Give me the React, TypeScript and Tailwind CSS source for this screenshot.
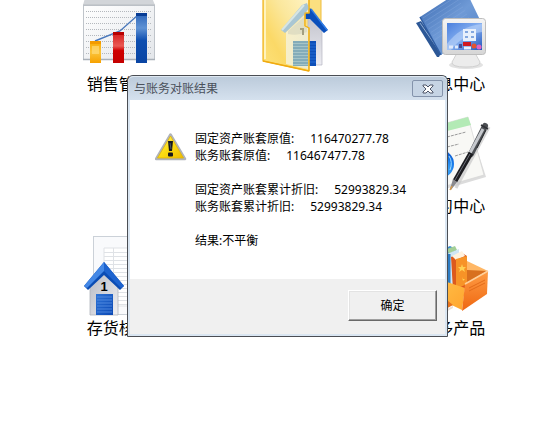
import React from 'react'

const cjkFont = 'font-["Noto_Sans","Noto_Sans_CJK_SC",sans-serif]'

const SalesIcon = () => (
    <svg viewBox="0 0 96 80" className="h-20 w-24" aria-hidden="true">
        <defs>
            <linearGradient id="board" x1="0" y1="0" x2="1" y2="1">
                <stop offset="0" stopColor="#ffffff" />
                <stop offset="1" stopColor="#e3e6ea" />
            </linearGradient>
            <linearGradient id="barYellow" x1="0" y1="0" x2="0" y2="1">
                <stop offset="0" stopColor="#f9a800" />
                <stop offset="0.5" stopColor="#fbc53c" />
                <stop offset="1" stopColor="#f6a100" />
            </linearGradient>
            <linearGradient id="barRed" x1="0" y1="0" x2="0" y2="1">
                <stop offset="0" stopColor="#d31a1a" />
                <stop offset="0.45" stopColor="#ea5a55" />
                <stop offset="0.6" stopColor="#cf0000" />
                <stop offset="1" stopColor="#c40000" />
            </linearGradient>
            <linearGradient id="barBlue" x1="0" y1="0" x2="0" y2="1">
                <stop offset="0" stopColor="#2a63b8" />
                <stop offset="0.3" stopColor="#5f92d4" />
                <stop offset="0.55" stopColor="#0d4eb0" />
                <stop offset="1" stopColor="#0a45a3" />
            </linearGradient>
        </defs>
        <path d="M14 6H81L84 13H12Z" fill="#d2d5d9" />
        <rect x="12.5" y="13.5" width="71" height="54" fill="url(#board)" stroke="#bfc4ca" />
        <path d="M12 13H84" stroke="#b8bcc1" strokeWidth="1" />
        <path d="M12 67.5H84" stroke="#a9b0b8" strokeWidth="1.5" />
        {[19, 25, 31, 37, 43, 49, 55, 61].map((y) => (
            <path key={y} d={`M15 ${y}.5H81`} stroke="#b4b8bd" strokeDasharray="1 1" />
        ))}
        <path d="M24 49L49 39L67 23" fill="none" stroke="#4a78bb" strokeWidth="1.4" />
        <rect x="19" y="49" width="11" height="22" fill="url(#barYellow)" />
        <rect x="19" y="49" width="11" height="3" fill="#f39a00" />
        <path d="M21 54H28V62H21Z" fill="#ffdf86" opacity="0.6" />
        <rect x="42" y="40" width="11" height="31" fill="url(#barRed)" />
        <rect x="42" y="40" width="11" height="3" fill="#b80000" />
        <rect x="65" y="21" width="11" height="50" fill="url(#barBlue)" />
        <rect x="65" y="21" width="11" height="3" fill="#073c94" />
    </svg>
)

const FolderIcon = () => (
    <svg viewBox="0 0 96 80" className="h-20 w-24" aria-hidden="true">
        <defs>
            <linearGradient id="folder" x1="0" y1="1" x2="1" y2="0">
                <stop offset="0" stopColor="#fde27c" />
                <stop offset="0.3" stopColor="#fbd967" />
                <stop offset="0.6" stopColor="#fbe79c" />
                <stop offset="1" stopColor="#fff5c8" />
            </linearGradient>
            <linearGradient id="fadedWall" x1="0" y1="0" x2="1" y2="0">
                <stop offset="0" stopColor="#f7efc9" />
                <stop offset="1" stopColor="#eeebcf" />
            </linearGradient>
            <linearGradient id="sideWall" x1="0" y1="0" x2="0" y2="1">
                <stop offset="0" stopColor="#c3c4cd" />
                <stop offset="1" stopColor="#ececf2" />
            </linearGradient>
        </defs>
        <path d="M68 0H83V36H68Z" fill="#fbdf80" />
        <path d="M83 0V33" stroke="#efbd3c" />
        <path d="M70 26L76 26L84 38V73H70Z" fill="url(#sideWall)" stroke="#b4b6c2" strokeWidth="0.7" />
        <rect x="70" y="49" width="8" height="25" fill="#0d4fb8" />
        {[52, 55, 58, 61, 64, 67, 70].map((y) => (
            <path key={y} d={`M70 ${y}H78`} stroke="#2a72da" strokeWidth="0.8" />
        ))}
        <path d="M66 21L72 16L90 38L86 41L72 27H66Z" fill="#0a4fbb" />
        <path d="M73 17L89 38" stroke="#2f7be4" strokeWidth="1.5" />
        <path
            d="M25 0V69L71 79V36L67 34V21H71V0Z"
            fill="url(#folder)"
            stroke="#f0b41e"
            strokeWidth="1.2"
            strokeLinejoin="round"
        />
        <path d="M27 0V67" stroke="#fff3bd" strokeWidth="2" />
        <path d="M48 40L66 24V34L70 36V77L48 72Z" fill="url(#fadedWall)" />
        <path d="M50 39L66 25V34L69 36V40Q60 44 50 42Z" fill="#d3d3bd" opacity="0.6" />
        <path d="M55 49H70V74H55Z" fill="#84acb9" />
        {[51, 54, 57, 60, 63, 66, 69, 72].map((y) => (
            <path key={y} d={`M55 ${y}.5H70`} stroke="#a5c4c8" strokeWidth="1" />
        ))}
        <path d="M43 38L64 13L69 11L71 16L66 23L47 41Z" fill="#a9c6d3" />
        <path d="M44 38L66 13" stroke="#d7e5e3" strokeWidth="2" />
        <path d="M62 37H65V43" fill="none" stroke="#a39f80" strokeWidth="2" />
        <path d="M71 79V36L67 34V21H71V0" fill="none" stroke="#f0b41e" strokeWidth="1.2" />
        <path d="M25 69L71 79" stroke="#f0aa10" strokeWidth="1.5" />
    </svg>
)

const InfoIcon = () => (
    <svg viewBox="0 0 96 80" className="h-20 w-24" aria-hidden="true">
        <defs>
            <linearGradient id="book" x1="0" y1="0" x2="1" y2="1">
                <stop offset="0" stopColor="#3a69b0" />
                <stop offset="0.5" stopColor="#6f9ad6" />
                <stop offset="1" stopColor="#4f7fc4" />
            </linearGradient>
            <linearGradient id="screen" x1="0" y1="0" x2="1" y2="1">
                <stop offset="0" stopColor="#4a7fdd" />
                <stop offset="0.5" stopColor="#86b0f0" />
                <stop offset="1" stopColor="#1f54bb" />
            </linearGradient>
            <linearGradient id="bezel" x1="0" y1="0" x2="0" y2="1">
                <stop offset="0" stopColor="#f4f4f4" />
                <stop offset="1" stopColor="#d6d6d6" />
            </linearGradient>
        </defs>
        <path d="M11 31L16 29L37 59L34 65H32Z" fill="#2c5796" />
        <path d="M15 31L35 60" stroke="#8fabd2" strokeWidth="1" />
        <path d="M15 25L52 1L64 5L76 30L36 63Z" fill="url(#book)" />
        <path d="M15 25L36 63" stroke="#2f5da3" strokeWidth="1.5" />
        {[0, 2, 4, 6, 8, 10, 12].map((n) => (
            <path key={n} d={`M${18 + n} ${26 + n * 1.8}L${52 + n} ${4 + n * 1.8}`} stroke="#86aadd" strokeWidth="0.4" />
        ))}
        <ellipse cx="61" cy="73" rx="17" ry="4" fill="#e2e2e2" />
        <path d="M52 61H70L75 70Q76 75 61 75Q46 75 47 70Z" fill="#ececec" stroke="#c9c9c9" strokeWidth="0.8" />
        <rect x="37.5" y="26.5" width="43" height="36" rx="3" fill="url(#bezel)" stroke="#bdbdbd" />
        <rect x="42" y="31" width="35" height="27" fill="url(#screen)" />
        <path d="M42 52Q55 34 77 32V40Q58 42 46 58H42Z" fill="#b9d2f8" opacity="0.6" />
        <path d="M58 37H71V49H58Z" fill="#e8f0fc" />
        <path d="M60 40H63M66 40H69M60 45H63M66 45H69" stroke="#83a7df" strokeWidth="2" />
        <path d="M44 55H48M50 55H53" stroke="#dfe9fb" strokeWidth="3" />
        <path d="M54 54H57" stroke="#444e90" strokeWidth="4" />
        <rect x="58" y="50" width="8" height="4" fill="#d0191f" />
        <path d="M59 56H66" stroke="#e8f0fc" strokeWidth="3" />
        <circle cx="69" cy="54" r="2.5" fill="#e5532e" />
        <circle cx="74" cy="55" r="2.5" fill="#df63c4" />
    </svg>
)

const StudyIcon = () => (
    <svg viewBox="0 0 96 80" className="h-20 w-24" aria-hidden="true">
        <defs>
            <radialGradient id="globe" cx="0.6" cy="0.7" r="0.7">
                <stop offset="0" stopColor="#5cc4ff" />
                <stop offset="0.6" stopColor="#1478ea" />
                <stop offset="1" stopColor="#0c4fc4" />
            </radialGradient>
        </defs>
        <path d="M20 17L62 4L81 63L30 78Z" fill="#dcdcdc" />
        <path d="M20 15L63 3L79 61L30 75Z" fill="#f8f8f5" stroke="#d5d5d5" strokeWidth="0.7" />
        <path d="M20 15L63 3L66 11L22 22Z" fill="#b3eab5" />
        <path d="M42 23L61 18M42 33L54 30M50 42L63 38" stroke="#9a9a9a" strokeWidth="1" strokeDasharray="3 1" />
        <circle cx="35" cy="50" r="14" fill="url(#globe)" />
        <path d="M44 42Q48 48 45 56" fill="none" stroke="#9fdcff" strokeWidth="1" />
        <path d="M84 13L51 74" stroke="#c8c8c8" strokeWidth="3" opacity="0.7" />
        <path d="M80 12L66 40" stroke="#4c4f53" strokeWidth="6" strokeLinecap="round" />
        <path d="M78 15L65 39" stroke="#c6c9ce" strokeWidth="3" />
        <path d="M66 39L50 67" stroke="#1c1c20" strokeWidth="5" />
        <path d="M65 40L50 66" stroke="#6c6f78" strokeWidth="1" />
        <path d="M48 65L52 68L46 76L45 75Z" fill="#8a8a8e" />
        <path d="M47 72L45 76" stroke="#d79b4a" strokeWidth="1.5" />
        <path d="M76 11L83 15" stroke="#303236" strokeWidth="1.5" />
        <path d="M81 16L72 34" stroke="#292b2f" strokeWidth="1" />
    </svg>
)

const StockIcon = () => (
    <svg viewBox="0 0 96 80" className="h-20 w-24" aria-hidden="true">
        <defs>
            <linearGradient id="wall" x1="0" y1="0" x2="1" y2="1">
                <stop offset="0" stopColor="#b5b8c2" />
                <stop offset="1" stopColor="#f0f0f3" />
            </linearGradient>
            <linearGradient id="door" x1="0" y1="0" x2="1" y2="1">
                <stop offset="0" stopColor="#2f74d6" />
                <stop offset="1" stopColor="#0a48b4" />
            </linearGradient>
        </defs>
        <rect x="22.5" y="0.5" width="62" height="78" fill="#f9fafc" stroke="#cbd1d8" />
        <path d="M33 12H80V70H33Z" fill="#ffffff" stroke="#dfe2e6" />
        {[16, 20, 24, 28, 32, 36, 40, 44, 48, 52, 56, 60, 64, 68].map((y) => (
            <path key={y} d={`M33 ${y}.5H80`} stroke="#dfe2e6" />
        ))}
        <path d="M42.5 12V70" stroke="#dfe2e6" />
        <path d="M19 48L33 35L47 48V79H19Z" fill="url(#wall)" stroke="#aeb2bb" strokeWidth="0.8" />
        <path d="M33 26L13 50L17 54L33 39L49 54L53 50Z" fill="#0b4cb4" />
        <path d="M33 26L13 50L16 52L33 35Z" fill="#4488e6" />
        <path d="M33 26L53 50L50 52L33 35Z" fill="#1d63cf" />
        <text
            x="33"
            y="55"
            textAnchor="middle"
            className='fill-black font-["Liberation_Sans",sans-serif] text-[13px] font-bold'
        >
            1
        </text>
        <rect x="25" y="58" width="17" height="21" fill="url(#door)" />
        {[61, 64, 67, 70, 73, 76].map((y) => (
            <path key={y} d={`M26 ${y}H41`} stroke="#5c93e4" strokeWidth="0.8" />
        ))}
    </svg>
)

const ProductsIcon = () => (
    <svg viewBox="0 0 96 80" className="h-20 w-24" aria-hidden="true">
        <defs>
            <linearGradient id="boxFront" x1="0" y1="0" x2="0" y2="1">
                <stop offset="0" stopColor="#ff9d45" />
                <stop offset="1" stopColor="#ee6711" />
            </linearGradient>
            <linearGradient id="boxSide" x1="0" y1="0" x2="1" y2="1">
                <stop offset="0" stopColor="#ffc04a" />
                <stop offset="1" stopColor="#ffa52e" />
            </linearGradient>
        </defs>
        <path d="M62 27L82 35L60 48L40 44Z" fill="#d8701f" />
        <path d="M62 25L83 35L62 34Z" fill="#ffb765" />
        <path d="M34 15L45 10L51 13V50H34Z" fill="#3d8ed1" />
        <path d="M42 13L50 10L52 14L44 18Z" fill="#a3cf97" />
        <path d="M42 18L54 13V50H42Z" fill="#cfe6f4" />
        <path d="M44 18V48" stroke="#2d7cc3" strokeWidth="3" />
        <path d="M46 21L57 17L62 20V52L48 54Z" fill="#dd5a1c" />
        <path d="M47 20L57 15L60 20L51 24Z" fill="#fff2df" />
        <path d="M51 23L62 20V48L51 53Z" fill="#f79327" />
        <path d="M57 28L58 31L61 31L59 33L60 36L57 34L54 36L55 33L53 31L56 31Z" fill="#ffd052" />
        <path d="M57 41L58 43L60 43L58 45Z" fill="#ffd052" />
        <path d="M30 42L60 52L57 74L30 61Z" fill="url(#boxSide)" />
        <path d="M60 48L83 35L82 58L57 75Z" fill="url(#boxFront)" />
        <path d="M60 48L83 35" stroke="#ffd09a" strokeWidth="1.5" />
        <path d="M64 52L80 44M64 55L80 47" stroke="#e36c1b" strokeWidth="1" />
        <path d="M34 68L43 65L48 69L37 75Z" fill="#e8731e" />
        <path d="M38 75L48 70V72L39 77Z" fill="#eadfd6" />
    </svg>
)

const WarningIcon = () => (
    <svg viewBox="0 0 32 30" className="mt-0.5 h-[30px] w-8 shrink-0" role="img" aria-label="警告">
        <defs>
            <linearGradient id="warn" x1="0" y1="0" x2="1" y2="1">
                <stop offset="0" stopColor="#fff27a" />
                <stop offset="0.5" stopColor="#fbdc12" />
                <stop offset="1" stopColor="#eebb00" />
            </linearGradient>
        </defs>
        <path d="M15.5 2.5L30 27H1Z" fill="#c3c6ca" stroke="#b0b3b8" strokeWidth="2.5" strokeLinejoin="round" />
        <path d="M15.5 4L28.5 26H2.5Z" fill="url(#warn)" stroke="#e2b500" strokeWidth="0.8" strokeLinejoin="round" />
        <path d="M13 9H18L17 19H14Z" fill="#15171c" />
        <rect x="13" y="20.5" width="5" height="4" rx="1" fill="#15171c" />
        <path d="M15 11L16 17" stroke="#4b5a66" strokeWidth="1" />
    </svg>
)

const shortcuts = [
    { label: '销售管理', icon: <SalesIcon /> },
    { label: '', icon: <FolderIcon /> },
    { label: '信息中心', icon: <InfoIcon /> },
    null,
    null,
    { label: '学习中心', icon: <StudyIcon /> },
    { label: '存货核算', icon: <StockIcon /> },
    null,
    { label: '更多产品', icon: <ProductsIcon /> },
]

const rows = [
    { label: '固定资产账套原值:', value: '116470277.78' },
    { label: '账务账套原值:', value: '116467477.78' },
    null,
    { label: '固定资产账套累计折旧:', value: '52993829.34' },
    { label: '账务账套累计折旧:', value: '52993829.34' },
    null,
    { label: '结果:不平衡', value: '' },
]

const ResultDialog = () => (
    <div
        role="dialog"
        aria-labelledby="dialog-title"
        className="absolute left-[127px] top-[75px] w-[321px] rounded-t-md border border-[#4b4e54] bg-[#dae6f2] text-xs"
    >
        <div className="flex h-6 items-center justify-between rounded-t-md border-t border-[#dfe8f1] bg-linear-to-b from-[#bccbdb] to-[#d5e1ee] pl-1.5 pr-1">
            <h1 id="dialog-title" className="text-[#4a515b]">与账务对账结果</h1>
            <button
                type="button"
                aria-label="关闭"
                className="flex h-[17px] w-[31px] items-center justify-center rounded-xs border border-[#8493ab] bg-[#c6d4e4]"
            >
                <svg viewBox="0 0 12 10" className="h-2.5 w-3" aria-hidden="true">
                    <path
                        d="M1 1H4L6 3L8 1H11V2L8 5L11 8V9H8L6 7L4 9H1V8L4 5L1 2Z"
                        fill="#ffffff"
                        stroke="#4d5568"
                        strokeWidth="1"
                        strokeLinejoin="round"
                    />
                </svg>
            </button>
        </div>
        <div className="mx-0.5 mb-0.5">
            <div className="flex gap-2 bg-white py-[30px] pl-[25px]">
                <WarningIcon />
                <div className="text-black">
                    {rows.map((row, i) => (
                        <p key={i} className="flex h-[17px] gap-4 leading-[17px]">
                            {row && <span>{row.label}</span>}
                            {row && row.value && <span>{row.value}</span>}
                        </p>
                    ))}
                </div>
            </div>
            <div className="flex justify-end bg-[#f0f0f0] py-[11px] pr-2">
                <button
                    type="button"
                    className="h-[31px] w-[89px] border border-b-[#696969] border-l-white border-r-[#696969] border-t-white bg-[#f0f0f0] text-black shadow-[inset_-1px_-1px_0_#a0a0a0,inset_1px_1px_0_#e3e3e3]"
                >
                    确定
                </button>
            </div>
            <div className="h-0.5 bg-[#f0f0f0]" />
        </div>
    </div>
)

export default function App() {
    return (
        <main className={`relative min-h-screen overflow-hidden bg-white ${cjkFont}`}>
            <div className="-mt-2 grid grid-cols-3 gap-y-[18px] pl-[35px]">
                {shortcuts.map((item, i) => (
                    <div key={i} className="flex flex-col items-center">
                        {item && item.icon}
                        {item && item.label && <span className="text-base leading-6 text-black">{item.label}</span>}
                    </div>
                ))}
            </div>
            <ResultDialog />
        </main>
    )
}
